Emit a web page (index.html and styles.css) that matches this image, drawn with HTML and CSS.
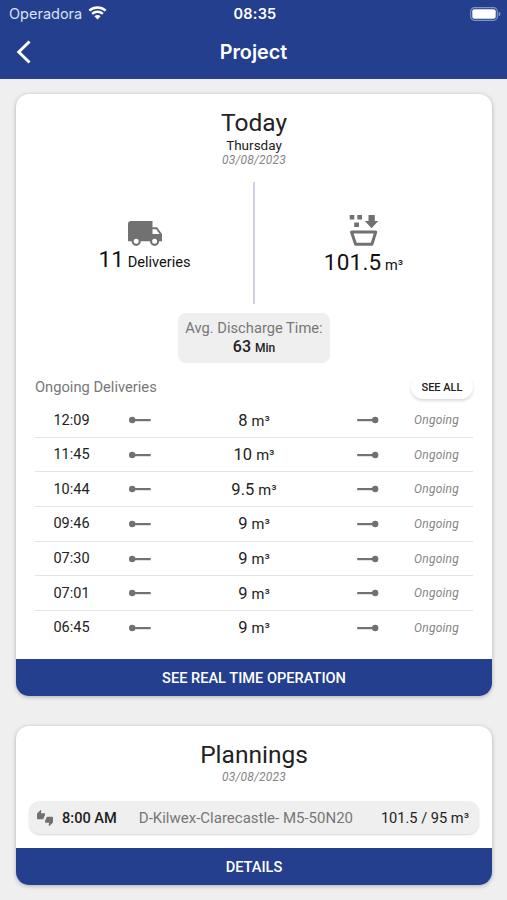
FILE: index.html
```html
<!DOCTYPE html>
<html lang="en">
<head>
<meta charset="utf-8">
<meta name="viewport" content="width=device-width">
<title>Project</title>
<link rel="stylesheet" href="styles.css">
</head>
<body>
<svg class="defs" width="0" height="0">
  <symbol id="start" viewBox="0 0 22 8"><circle cx="3.2" cy="4" r="3.2"/><rect x="3" y="3" width="18.7" height="2.2"/></symbol>
  <symbol id="end" viewBox="0 0 22 8"><circle cx="18.2" cy="4" r="3.2"/><rect x="0.2" y="3" width="18.2" height="2.2"/></symbol>
</svg>
<header class="header">
  <div class="status">
    <div class="carrier"><span>Operadora</span>
      <svg class="wifi" viewBox="0 0 19 14" width="19" height="14"><path d="M1.3 4.7C6 .5 13 .5 17.7 4.7M4.1 7.8c3.1-2.8 7.7-2.8 10.8 0" fill="none" stroke="#fff" stroke-width="2.4"/><path d="M6.4 10.2c1.8-1.5 4.4-1.5 6.2 0L9.5 13.5z" fill="#fff"/></svg>
    </div>
    <span class="clock">08:35</span>
    <svg class="battery" viewBox="0 0 31 14" width="31" height="14"><rect x=".7" y=".7" width="26.6" height="12.6" rx="3.8" fill="none" stroke="#8492c4" stroke-width="1.2"/><rect x="2.3" y="2.3" width="23.4" height="9.4" rx="2" fill="#fff"/><path d="M28.7 4.7q1.8.6 1.8 2.3t-1.8 2.3z" fill="#8492c4"/></svg>
  </div>
  <div class="nav">
    <svg class="back" viewBox="0 0 16 24" width="16" height="24"><path d="M14.5 1.5 3.8 12l10.7 10.5" fill="none" stroke="#fff" stroke-width="3"/></svg>
    <h1>Project</h1>
  </div>
</header>
<main>
  <section class="card today">
    <h2>Today</h2>
    <div class="weekday">Thursday</div>
    <div class="date">03/08/2023</div>
    <div class="stats">
      <div class="stat deliveries">
        <svg viewBox="0 0 34 25" width="34" height="25" fill="#717171"><path fill-rule="evenodd" d="M3 0H24.5V6.2H29L34 13V20.3H31.2a4.6 4.6 0 0 1-9.2 0H12.8a4.6 4.6 0 0 1-9.2 0H0V3Q0 0 3 0ZM24.5 8.3V13H31.6L28.2 8.3ZM8.2 17.8a2.5 2.5 0 1 0 0 5a2.5 2.5 0 1 0 0-5ZM26.6 17.8a2.5 2.5 0 1 0 0 5a2.5 2.5 0 1 0 0-5Z"/></svg>
        <div class="figure"><b>11</b> <span>Deliveries</span></div>
      </div>
      <div class="divider"></div>
      <div class="stat volume">
        <svg viewBox="0 0 29 32" width="29" height="32" fill="#717171"><path d="M.7 1H5.3V5.4H.7ZM8.3 1H13V5.4H8.3ZM5.2 8.6H10V13H5.2ZM19.5 1H25.8V7H29.2L22.6 14.2L15.7 7H19.5Z"/><path d="M2.5 18.1H26.7L22.9 30.2H6.6Z" fill="none" stroke="#717171" stroke-width="3" stroke-linejoin="round"/></svg>
        <div class="figure"><b>101.5</b> <span>m³</span></div>
      </div>
    </div>
    <div class="average"><div>Avg. Discharge Time:</div><p>63 <small>Min</small></p></div>
    <div class="list-head"><span>Ongoing Deliveries</span><button>SEE ALL</button></div>
    <ul class="list">
      <li><time>12:09</time><svg><use href="#start"/></svg><b>8 <small>m³</small></b><svg><use href="#end"/></svg><em>Ongoing</em></li>
      <li><time>11:45</time><svg><use href="#start"/></svg><b>10 <small>m³</small></b><svg><use href="#end"/></svg><em>Ongoing</em></li>
      <li><time>10:44</time><svg><use href="#start"/></svg><b>9.5 <small>m³</small></b><svg><use href="#end"/></svg><em>Ongoing</em></li>
      <li><time>09:46</time><svg><use href="#start"/></svg><b>9 <small>m³</small></b><svg><use href="#end"/></svg><em>Ongoing</em></li>
      <li><time>07:30</time><svg><use href="#start"/></svg><b>9 <small>m³</small></b><svg><use href="#end"/></svg><em>Ongoing</em></li>
      <li><time>07:01</time><svg><use href="#start"/></svg><b>9 <small>m³</small></b><svg><use href="#end"/></svg><em>Ongoing</em></li>
      <li><time>06:45</time><svg><use href="#start"/></svg><b>9 <small>m³</small></b><svg><use href="#end"/></svg><em>Ongoing</em></li>
    </ul>
    <button class="action">SEE REAL TIME OPERATION</button>
  </section>
  <section class="card plannings">
    <h2>Plannings</h2>
    <div class="date">03/08/2023</div>
    <div class="plan">
      <svg viewBox="0 0 24 24" width="16" height="16" fill="#717171"><path d="M12 6c0-.55-.45-1-1-1H5.82l.66-3.18.02-.23c0-.31-.13-.59-.33-.8L5.38 0 .44 4.94C.17 5.21 0 5.59 0 6v6.500c0 .83.67 1.500 1.500 1.500h6.750c.62 0 1.150-.38 1.380-.91l2.260-5.290c.07-.17.110-.36.110-.55V6zm10.500 4h-6.750c-.62 0-1.150.38-1.380.91l-2.260 5.290c-.07.17-.110.36-.110.55V18c0 .55.45 1 1 1h5.180l-.66 3.180-.02.24c0 .310.130.590.330.800l.790.780 4.940-4.940c.270-.270.440-.650.440-1.060v-6.500c0-.83-.67-1.500-1.500-1.500z"/></svg>
      <strong>8:00 AM</strong><span>D-Kilwex-Clarecastle- M5-50N20</span><b>101.5 / 95 m³</b>
    </div>
    <button class="action">DETAILS</button>
  </section>
</main>
</body>
</html>
```
FILE: styles.css
```css
* { box-sizing: border-box; margin: 0; padding: 0; }
body { background: #efefef; color: #222; font-family: Roboto, sans-serif; height: 900px; overflow: hidden; }
svg { display: block; flex: none; }
.defs { position: absolute; }
button { border: 0; font-family: inherit; }
b { font-weight: 400; }
.header { height: 79px; background: #233f8e; color: #fff; font-family: Inter, sans-serif; }
.status { display: grid; grid-template-columns: 1fr auto 1fr; align-items: center; height: 27px; padding: 0 6px 0 9px; }
.carrier { display: flex; gap: 6px; font-size: 14.5px; line-height: 27px; color: #dbe1f4; }
.wifi { margin-top: 6px; }
.clock { font-size: 14.5px; font-weight: 600; letter-spacing: .2px; }
.battery { justify-self: end; }
.nav { display: grid; grid-template-columns: 1fr auto 1fr; align-items: center; height: 50px; padding: 0 15px; }
h1 { font-size: 19.8px; font-weight: 600; line-height: 24px; }
main { display: flex; flex-direction: column; gap: 30px; padding: 15px 15px 0 16px; }
.card { display: flex; flex-direction: column; border-radius: 13px; background: #fff; box-shadow: 0 1px 4px rgba(0,0,0,.28); text-align: center; overflow: hidden; }
.today { height: 602px; padding-top: 14px; }
.plannings { height: 159px; padding-top: 14px; }
h2 { font-size: 24.5px; line-height: 30px; font-weight: 400; }
.weekday { font-size: 13.5px; line-height: 15px; }
.date { font-size: 12px; line-height: 15px; font-style: italic; color: #858585; letter-spacing: .2px; }
.stats { display: grid; grid-template-columns: 1fr 2px 1fr; height: 122px; margin-top: 14px; }
.divider { background: #cfcfe6; }
.stat { display: flex; flex-direction: column; align-items: center; }
.deliveries { padding: 39px 0 0 20px; }
.deliveries .figure { margin-top: -1px; }
.volume { padding: 32px 20px 0 0; }
.volume .figure { margin-top: 2px; }
.figure { color: #111; font-size: 14.6px; line-height: 28px; white-space: nowrap; }
.figure b { font-size: 22.5px; letter-spacing: .2px; }
.average { align-self: center; width: 152px; height: 50px; margin-top: 9px; padding-top: 6px; border-radius: 8px; background: #efefef; font-size: 14.7px; line-height: 18px; color: #777; white-space: nowrap; }
.average p { color: #222; font-size: 16px; font-weight: 500; line-height: 19px; }
.average small { font-size: 12px; }
.list-head { display: flex; justify-content: space-between; height: 40px; padding: 12px 19px 0; font-size: 14.7px; line-height: 24px; color: #777; }
.list-head button { width: 62px; height: 24px; border-radius: 12px; background: #fff; box-shadow: 0 2px 3px rgba(0,0,0,.14); color: #222; font-size: 11px; font-weight: 500; }
.list { list-style: none; margin: 0 19px; }
.list li { display: grid; grid-template-columns: 73px 64px 164px 64px 73px; align-items: center; justify-items: center; height: 34.65px; padding-top: .5px; border-bottom: 1px solid #e4e4e4; }
.list li:last-child { border: 0; padding-bottom: 1px; }
.list svg { width: 22px; height: 8px; fill: #717171; }
.list time { font-size: 14.5px; }
.list b { font-size: 16.5px; }
.list small { font-size: 14.7px; }
.list em { font-size: 12px; color: #858585; letter-spacing: .2px; }
.action { height: 37px; flex: none; margin-top: auto; background: #233f8e; color: #fff; font-size: 14.6px; font-weight: 500; }
.plan { display: flex; align-items: center; height: 33px; margin: 16px 13px 0; padding: 0 10px 0 8px; border-radius: 11px; background: #efefef; box-shadow: 0 1px 2px rgba(0,0,0,.16); white-space: nowrap; font-size: 14.6px; }
.plan strong { margin-left: 9px; font-weight: 500; }
.plan span { margin: 0 auto 0 22px; color: #777; font-size: 15px; }
```
